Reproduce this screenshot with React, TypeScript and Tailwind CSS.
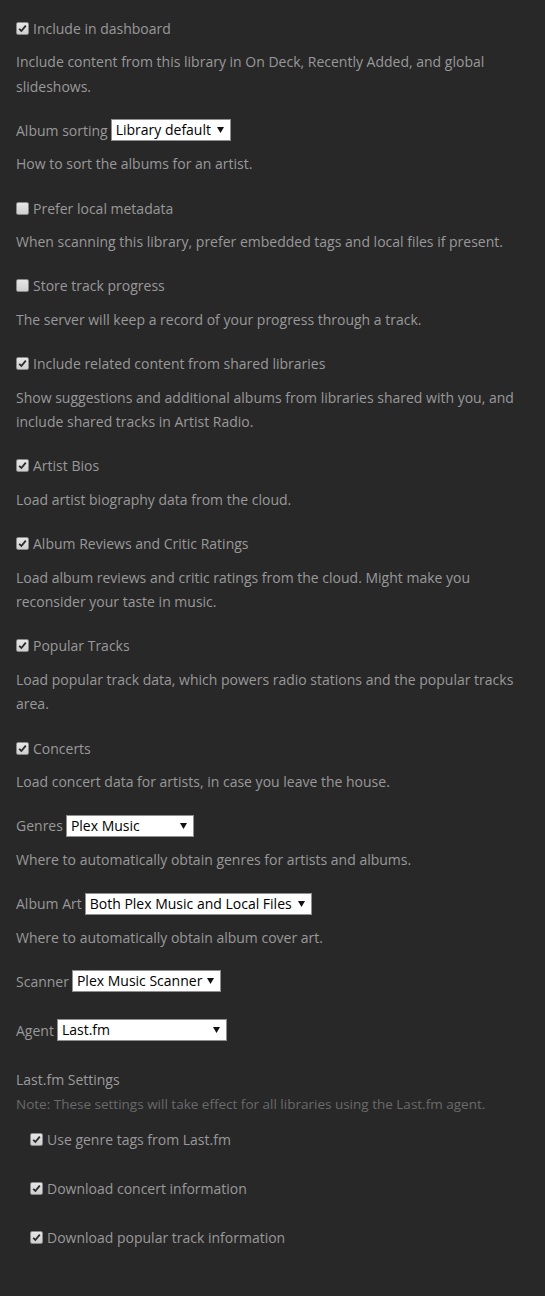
import React from "react";

function Box({ checked }: { checked: boolean }) {
  return (
    <span className="inline-flex h-[13px] w-[13px] shrink-0 items-center justify-center rounded-[2px] border border-[#8a8a8a] bg-gradient-to-b from-[#e6e6e6] to-[#cfcfcf]">
      {checked && (
        <svg width="9" height="9" viewBox="0 0 9 9">
          <path d="M1.2 4.8 L3.4 7 L7.8 1.6" fill="none" stroke="#2a2a2a" strokeWidth="1.8" />
        </svg>
      )}
    </span>
  );
}

function Select({ value, width }: { value: string; width: string }) {
  return (
    <span
      className={`inline-flex h-[22px] items-center justify-between border border-[#8f8f8f] bg-white pl-[4px] pr-[6px] text-[14px] text-black ${width}`}
    >
      <span className="leading-none">{value}</span>
      <svg width="7" height="6" viewBox="0 0 7 6">
        <path d="M0 0 H7 L3.5 6 Z" fill="#111" />
      </svg>
    </span>
  );
}

function CheckRow({ label, checked }: { label: string; checked: boolean }) {
  return (
    <div className="flex h-6 items-center gap-[4px]">
      <Box checked={checked} />
      <span>{label}</span>
    </div>
  );
}

function SelectRow({ label, value, width }: { label: string; value: string; width: string }) {
  return (
    <div className="flex h-6 items-center gap-[3px]">
      <span>{label}</span>
      <Select value={value} width={width} />
    </div>
  );
}

function Desc({ children }: { children: React.ReactNode }) {
  return <p className="mt-[10px] leading-[24.5px]">{children}</p>;
}

export default function App() {
  const blocks: { kind: "check" | "select"; label: string; checked?: boolean; value?: string; width?: string; desc?: string }[] = [
    { kind: "check", label: "Include in dashboard", checked: true, desc: "Include content from this library in On Deck, Recently Added, and global slideshows." },
    { kind: "select", label: "Album sorting", value: "Library default", width: "w-[120px]", desc: "How to sort the albums for an artist." },
    { kind: "check", label: "Prefer local metadata", checked: false, desc: "When scanning this library, prefer embedded tags and local files if present." },
    { kind: "check", label: "Store track progress", checked: false, desc: "The server will keep a record of your progress through a track." },
    { kind: "check", label: "Include related content from shared libraries", checked: true, desc: "Show suggestions and additional albums from libraries shared with you, and include shared tracks in Artist Radio." },
    { kind: "check", label: "Artist Bios", checked: true, desc: "Load artist biography data from the cloud." },
    { kind: "check", label: "Album Reviews and Critic Ratings", checked: true, desc: "Load album reviews and critic ratings from the cloud. Might make you reconsider your taste in music." },
    { kind: "check", label: "Popular Tracks", checked: true, desc: "Load popular track data, which powers radio stations and the popular tracks area." },
    { kind: "check", label: "Concerts", checked: true, desc: "Load concert data for artists, in case you leave the house." },
    { kind: "select", label: "Genres", value: "Plex Music", width: "w-[128px]", desc: "Where to automatically obtain genres for artists and albums." },
    { kind: "select", label: "Album Art", value: "Both Plex Music and Local Files", width: "w-[227px]", desc: "Where to automatically obtain album cover art." },
  ];

  return (
    <div
      className="min-h-screen bg-[#282828] px-4 pt-4 text-[14px] text-[#999999]"
      style={{ fontFamily: '"Open Sans", "Liberation Sans", sans-serif' }}
    >
      {blocks.map((b, i) => (
        <div key={i} className="mb-[19.25px]">
          {b.kind === "check" ? (
            <CheckRow label={b.label} checked={!!b.checked} />
          ) : (
            <SelectRow label={b.label} value={b.value!} width={b.width!} />
          )}
          {b.desc && <Desc>{b.desc}</Desc>}
        </div>
      ))}
      <div className="mb-[25px]">
        <SelectRow label="Scanner" value="Plex Music Scanner" width="w-[149px]" />
      </div>
      <div>
        <SelectRow label="Agent" value="Last.fm" width="w-[170px]" />
      </div>
      <div className="mt-[26px]">
        <div className="leading-6 text-[#9c9c9c]">Last.fm Settings</div>
        <div className="text-[13.5px] leading-6 text-[#6a6a6a]">
          Note: These settings will take effect for all libraries using the Last.fm agent.
        </div>
        <div className="mt-[11px] flex flex-col gap-[25px] pl-[14px]">
          <CheckRow label="Use genre tags from Last.fm" checked />
          <CheckRow label="Download concert information" checked />
          <CheckRow label="Download popular track information" checked />
        </div>
      </div>
    </div>
  );
}
